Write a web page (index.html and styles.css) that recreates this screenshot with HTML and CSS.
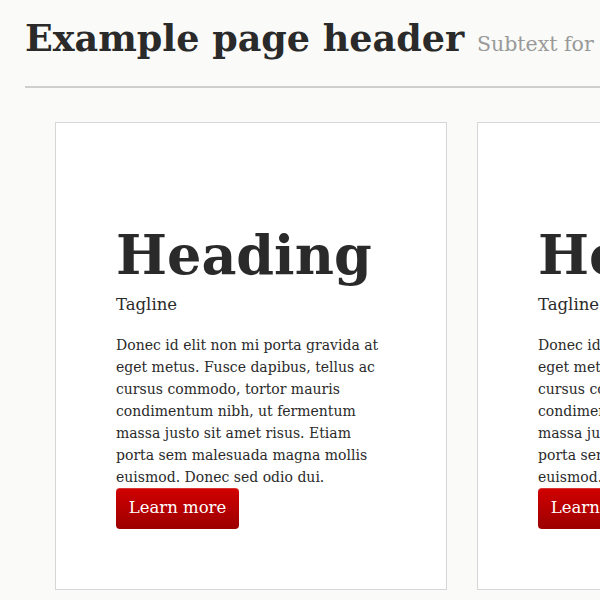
FILE: index.html
```html
<!DOCTYPE html>
<html>
<head>
<meta charset="utf-8">
<link rel="stylesheet" href="styles.css">
</head>
<body>
<div class="page">
  <header class="page-header">
    <h1 class="title">Example page header <small class="subtext">Subtext for header</small></h1>
  </header>
  <div class="cards">
    <section class="card">
      <h2 class="heading">Heading</h2>
      <p class="tagline">Tagline</p>
      <p class="text">Donec id elit non mi porta gravida at eget metus. Fusce dapibus, tellus ac cursus commodo, tortor mauris condimentum nibh, ut fermentum massa justo sit amet risus. Etiam porta sem malesuada magna mollis euismod. Donec sed odio dui.</p>
      <a class="btn" href="#">Learn more</a>
    </section>
    <section class="card">
      <h2 class="heading">Heading</h2>
      <p class="tagline">Tagline</p>
      <p class="text">Donec id elit non mi porta gravida at eget metus. Fusce dapibus, tellus ac cursus commodo, tortor mauris condimentum nibh, ut fermentum massa justo sit amet risus. Etiam porta sem malesuada magna mollis euismod. Donec sed odio dui.</p>
      <a class="btn" href="#">Learn more</a>
    </section>
  </div>
</div>
</body>
</html>
```
FILE: styles.css
```css
html, body {
  margin: 0;
  padding: 0;
  overflow: hidden;
  background: #fafbf8;
}
body {
  font-family: "DejaVu Serif", Georgia, serif;
  color: #2a2a2a;
}
.page {
  padding: 0 0 0 25px;
  width: 1200px;
}
.page-header {
  border-bottom: 2px solid #cfcfcf;
  padding: 17px 0 20px;
}
.title {
  margin: 0;
  font-size: 36.5px;
  line-height: 44px;
  font-weight: bold;
  white-space: nowrap;
}
.subtext {
  font-size: 20.5px;
  font-weight: normal;
  color: #999;
}
.cards {
  display: flex;
  gap: 30px;
  padding: 34px 0 0 30px;
}
.card {
  width: 270px;
  padding: 60px;
  background: #fff;
  border: 1px solid #d6d6d6;
  flex: none;
}
.heading {
  margin: 40px 0 0;
  font-size: 54px;
  line-height: 64px;
  font-weight: bold;
}
.tagline {
  margin: 6px 0 17px;
  font-size: 16.5px;
  line-height: 24px;
}
.text {
  margin: 0;
  font-size: 14px;
  line-height: 22px;
}
.btn {
  display: inline-block;
  width: 123px;
  height: 41px;
  box-sizing: border-box;
  line-height: 40px;
  text-align: center;
  color: #fff;
  text-decoration: none;
  font-size: 16.5px;
  border-radius: 4px;
  background: linear-gradient(#d10000, #9c0000);
  box-shadow: inset 0 1px 0 rgba(255,255,255,0.2);
}
```
